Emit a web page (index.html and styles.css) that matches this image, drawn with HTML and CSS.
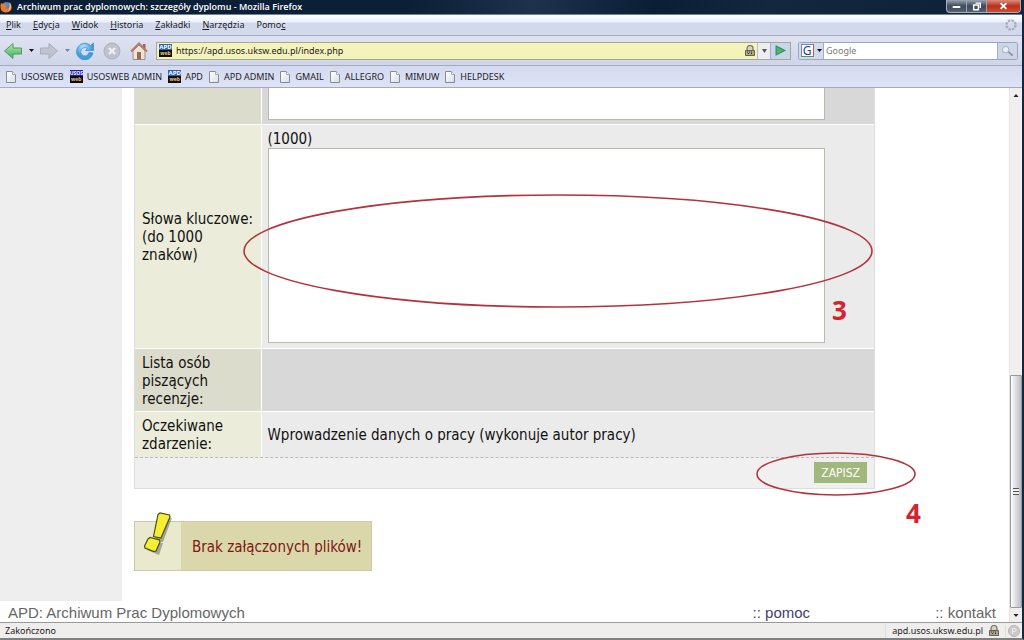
FILE: index.html
```html
<!DOCTYPE html>
<html lang="pl">
<head>
<meta charset="utf-8">
<title>Archiwum prac dyplomowych: szczegóły dyplomu</title>
<link rel="stylesheet" href="styles.css">
</head>
<body>
<svg class="defs" aria-hidden="true">
  <defs>
    <linearGradient id="paper" x2="1" y2="1"><stop offset="0" stop-color="#fff"/><stop offset="1" stop-color="#d9dfe3"/></linearGradient>
    <linearGradient id="green" x2="0" y2="1"><stop offset="0" stop-color="#b5e8ad"/><stop offset="1" stop-color="#3fae5f"/></linearGradient>
    <radialGradient id="blue" cx=".4" cy=".25"><stop offset="0" stop-color="#b4e6ff"/><stop offset="1" stop-color="#3d9fdf"/></radialGradient>
    <symbol id="page" viewBox="0 0 10 12"><path d="M.5.5h6l3 3v8h-9z" fill="url(#paper)" stroke="#848b94"/><path d="M6.500.5v3h3" fill="#fff" stroke="#a5abb3"/></symbol>
    <symbol id="lock" viewBox="0 0 10 11"><path d="M2 6V3.500a3 3 0 0 1 6 0V6" fill="#d5d2c4" stroke="#777263" stroke-width="1.200"/><path d="M.5 5.500h9v5h-9z" fill="#aaa58b" stroke="#666252"/><path d="M2 7h1m1 0h1m1 0h1M3 8.500h1m2 0h1" stroke="#333"/></symbol>
    <symbol id="arrow" viewBox="0 0 18 16"><path d="M.5 8L9 .5V5h8.500v6H9v4.500z"/></symbol>
  </defs>
</svg>
<div class="window">
  <header class="titlebar">
    <svg class="fox" viewBox="0 0 12 12"><circle cx="6.500" cy="5.500" r="4.500" fill="#4f86cd"/><path d="M1 2l2 1 3-1-1 2 2 1-2 2 2 1 3-2V2c3 4 2 9-4 9.500C1 11.500-.5 7 1 2z" fill="#ee7925"/><path d="M9 1c3 3 3 7-1 9 2-3 2-5 1-9z" fill="#ffc652"/></svg>
    <span class="caption">Archiwum prac dyplomowych: szczegóły dyplomu - Mozilla Firefox</span>
    <div class="winbtns">
      <button aria-label="Minimalizuj"><svg viewBox="0 0 20 12"><path d="M6 6h8v2H6z" fill="#fff"/></svg></button>
      <button aria-label="Przywróć"><svg viewBox="0 0 20 12"><path d="M9 3h5v5M7 5h5v5H7z" fill="none" stroke="#fff" stroke-width="1.500"/></svg></button>
      <button class="close" aria-label="Zamknij"><svg viewBox="0 0 34 12"><path d="M14 3l6 6m0-6l-6 6" stroke="#fff" stroke-width="2"/></svg></button>
    </div>
  </header>
  <nav class="menubar">
    <button><u>P</u>lik</button><button><u>E</u>dycja</button><button><u>W</u>idok</button><button><u>H</u>istoria</button><button><u>Z</u>akładki</button><button><u>N</u>arzędzia</button><button>Pomo<u>c</u></button>
    <svg class="throbber" viewBox="0 0 12 12"><circle cx="6" cy="6" r="4.500" fill="none" stroke="#a9adb8" stroke-width="2.400" stroke-dasharray="2.400 1.130"/></svg>
  </nav>
  <div class="toolbar">
    <div class="tools">
      <button aria-label="Wstecz"><svg class="i18" viewBox="0 0 18 16"><use href="#arrow" fill="url(#green)" stroke="#4d9c63"/></svg></button>
      <button class="drop" aria-label="Historia wstecz"><svg viewBox="0 0 5 3"><path d="M0 0h5L2.500 3z" fill="#111"/></svg></button>
      <button aria-label="Dalej"><svg class="i18 flip" viewBox="0 0 18 16"><use href="#arrow" fill="#bfc4d0" stroke="#a6abb9"/></svg></button>
      <button class="drop" aria-label="Historia dalej"><svg viewBox="0 0 5 3"><path d="M0 0h5L2.500 3z" fill="#7183a8"/></svg></button>
      <button aria-label="Odśwież"><svg class="i18" viewBox="0 0 18 18"><path d="M14.500 3.500A8.300 8.300 0 1 0 17 11l-4-.5a4.200 4.200 0 1 1-1.500-4L9.500 8.500h8V1z" fill="url(#blue)" stroke="#438ec8" stroke-width=".8"/></svg></button>
      <button class="stop" aria-label="Zatrzymaj"><svg class="i18" viewBox="0 0 18 18"><circle cx="9" cy="9" r="8" fill="#c0c3cd" stroke="#acb0bc"/><path d="M6 6l6 6m0-6l-6 6" stroke="#eef0f6" stroke-width="2.200"/></svg></button>
      <button class="home" aria-label="Strona startowa"><svg class="i18" viewBox="0 0 18 18"><path d="M3 9v8.500h12V9L9 3z" fill="#eee3d8" stroke="#a18e82"/><path d="M13 2h2.500v5L13 5z" fill="#a65f50"/><path d="M1 9.500L9 1.500l8 8" fill="none" stroke="#b47a6a" stroke-width="2"/><path d="M7 10h4v7.500H7z" fill="#9b6a50"/></svg></button>
    </div>
    <div class="address">
      <span class="fav">APD<small>web</small></span>
      <input type="text" aria-label="Adres" value="https://apd.usos.uksw.edu.pl/index.php">
      <svg class="lock" viewBox="0 0 10 11"><use href="#lock"/></svg>
      <button class="more" aria-label="Lista adresów"><svg viewBox="0 0 5 4"><path d="M0 0h5L2.500 4z" fill="#555"/></svg></button>
      <button class="go" aria-label="Przejdź"><svg viewBox="0 0 10 10"><path d="M1 1l8 4-8 4z" fill="#4fb573" stroke="#328b58"/></svg></button>
    </div>
    <div class="search">
      <button class="engine" aria-label="Wyszukiwarka"><span class="g">G</span><svg viewBox="0 0 5 3"><path d="M0 0h5L2.500 3z" fill="#111"/></svg></button>
      <input type="text" aria-label="Szukaj" placeholder="Google">
      <button class="find" aria-label="Szukaj"><svg viewBox="0 0 14 12"><circle cx="5" cy="4.500" r="3.500" fill="#e6f0f9" stroke="#9da8b8"/><path d="M8 7l4.500 4" stroke="#8791a3" stroke-width="2"/></svg></button>
    </div>
  </div>
  <nav class="bookmarks">
    <a href="#"><svg viewBox="0 0 10 12"><use href="#page"/></svg>USOSWEB</a>
    <a href="#"><span class="fav usos">USOS<small>web</small></span>USOSWEB ADMIN</a>
    <a href="#"><span class="fav">APD<small>web</small></span>APD</a>
    <a href="#"><svg viewBox="0 0 10 12"><use href="#page"/></svg>APD ADMIN</a>
    <a href="#"><svg viewBox="0 0 10 12"><use href="#page"/></svg>GMAIL</a>
    <a href="#"><svg viewBox="0 0 10 12"><use href="#page"/></svg>ALLEGRO</a>
    <a href="#"><svg viewBox="0 0 10 12"><use href="#page"/></svg>MIMUW</a>
    <a href="#"><svg viewBox="0 0 10 12"><use href="#page"/></svg>HELPDESK</a>
  </nav>
  <div class="view">
    <div class="doc">
      <div class="body">
        <main>
          <form class="details">
            <table>
              <tr class="dark first"><th></th><td><textarea class="abstract" aria-label="Streszczenie"></textarea></td></tr>
              <tr><th><label for="keywords">Słowa kluczowe: (do 1000 znaków)</label></th><td>(1000)<textarea id="keywords"></textarea></td></tr>
              <tr class="dark"><th>Lista osób piszących recenzje:</th><td></td></tr>
              <tr><th>Oczekiwane zdarzenie:</th><td>Wprowadzenie danych o pracy (wykonuje autor pracy)</td></tr>
            </table>
            <div class="actions"><button type="button">ZAPISZ</button></div>
            <svg class="ring ring-keywords" viewBox="0 0 630 114"><ellipse cx="315" cy="57" rx="314" ry="56"/></svg>
            <svg class="ring ring-save" viewBox="0 0 160 44"><ellipse cx="80" cy="22" rx="79" ry="21"/></svg>
            <span class="step step-three">3</span>
            <span class="step step-four">4</span>
          </form>
          <div class="notice">
            <div class="mark"><svg viewBox="0 0 34 44"><path d="M18 4l13 2-9 24-8-1zM9 30l13 1-4 12-12-5z" fill="#777" opacity=".6"/><path d="M17 2.500L19 1l9.500 2 .5 2-9 21-7.500-1.500z" fill="#f5ef2d" stroke="#4b4a28" stroke-width="1.200"/><path d="M7 27l2-1.500 9.500 2.500.5 2-4 9-2 .5L4 36l-.5-2z" fill="#f5ef2d" stroke="#4b4a28" stroke-width="1.200"/></svg></div>
            <p>Brak załączonych plików!</p>
          </div>
        </main>
      </div>
      <footer class="sitefoot"><span>APD: Archiwum Prac Dyplomowych</span><a class="help" href="#">:: pomoc</a><a href="#">:: kontakt</a></footer>
    </div>
    <div class="scroll">
      <svg viewBox="0 0 12 14"><path d="M3.500 9h5L6 6z" fill="#222"/></svg>
      <div class="track"><div class="thumb"><i></i></div></div>
      <svg viewBox="0 0 12 14"><path d="M3.500 6h5L6 9z" fill="#222"/></svg>
    </div>
  </div>
  <footer class="status"><span>Zakończono</span><div class="site">apd.usos.uksw.edu.pl<svg class="lock" viewBox="0 0 10 11"><use href="#lock"/></svg></div><div class="badge"><svg viewBox="0 0 12 12"><circle cx="6" cy="6" r="5.500" fill="#c9c9c9" stroke="#b7b7b7"/><path d="M4.500 9V3.500h2a1.500 1.500 0 0 1 0 3h-2" fill="none" stroke="#eee"/></svg></div></footer>
</div>
</body>
</html>
```
FILE: styles.css
```css
* { box-sizing: border-box; }
body { margin: 0; font: 9px/14px "Noto Sans", sans-serif; color: #1c1c24; }
button { margin: 0; padding: 0; border: 0; background: none; font: inherit; color: inherit; }
input { min-width: 0; border: 0; padding: 0; background: none; font: inherit; color: inherit; outline: 0; }
a { color: inherit; text-decoration: none; }
svg { display: block; flex: none; }
.defs { position: absolute; width: 0; height: 0; }
.window { display: flex; flex-direction: column; height: 100vh; overflow: hidden; border-right: 2px solid #16273d; border-bottom: 2px solid #808080; }

.titlebar { flex: none; display: flex; align-items: center; height: 15px; padding-right: 1px; background: linear-gradient(90deg, #0c1f36, #0b1f36 40%, #20314b 52%, #0b1e36 64%, #14273f 75%, #0b2036); border-bottom: 1px solid #6f8590; }
.fox { width: 12px; height: 12px; margin-right: 5px; }
.caption { flex: 1; color: #fff; font-family: "Open Sans", sans-serif; font-weight: 600; }
.winbtns { display: flex; align-self: flex-start; height: 13px; border: 1px solid #a6afb8; border-top: 0; border-radius: 0 0 4px 4px; overflow: hidden; background: linear-gradient(#9aa4b0, #3c4a5a 50%, #54616f); }
.winbtns button + button { border-left: 1px solid #9aa4ae; }
.winbtns svg { width: 19px; height: 12px; }
.winbtns .close { background: linear-gradient(#d98d7c, #b9301d 50%, #cf4d32); }
.winbtns .close svg { width: 33px; }

.menubar { flex: none; display: flex; align-items: center; gap: 12px; height: 21px; padding: 0 5px 0 6px; background: linear-gradient(#fff, #eceffa 7px, #d3d9ed 8px, #d4daee); border-bottom: 1px solid #a5abba; }
.throbber { width: 12px; height: 12px; margin-left: auto; }

.toolbar { flex: none; display: flex; align-items: center; height: 30px; padding: 0 4px; background: linear-gradient(#dfe3f2, #cfd5e9); border-bottom: 1px solid #a5abba; }
.tools { display: flex; align-items: center; width: 152px; }
.i18 { width: 18px; height: 18px; }
.flip { transform: scaleX(-1); }
.drop svg { width: 5px; height: 3px; margin: 0 6px 0 7px; }
.stop, .home { margin-left: 9px; }
.address { flex: 1; display: flex; align-items: center; height: 18px; border: 1px solid #a2a89c; background: #f4f3b9; }
.address .fav { margin: 0 4px 0 2px; }
.address input { flex: 1; }
.lock { width: 10px; height: 11px; }
.more, .go, .find, .engine { display: flex; align-items: center; justify-content: center; height: 100%; }
.more { width: 13px; margin-left: 2px; background: #edeef3; border-left: 1px solid #b8bcc6; }
.more svg { width: 5px; height: 4px; }
.go { width: 20px; background: #c9d5e9; border-left: 1px solid #a3b0c8; }
.go svg { width: 11px; height: 11px; }
.search { display: flex; align-items: center; width: 220px; height: 18px; margin-left: 7px; border: 1px solid #9ba6bd; border-radius: 2px; background: #fff; }
.engine { width: 25px; gap: 3px; background: #d3daec; border-right: 1px solid #a5adc0; }
.engine svg { width: 5px; height: 3px; }
.g { width: 13px; height: 13px; border: 1px solid #6e87c4; border-right-color: #c55; border-bottom-color: #595; background: #fff; color: #21408f; font-size: 12px; line-height: 11px; }
.search input { flex: 1; padding-left: 2px; }
.search input::placeholder { color: #777; opacity: 1; }
.find { width: 20px; background: #cdd6e9; border-left: 1px solid #a5adc0; }
.find svg { width: 13px; height: 12px; }
.fav { flex: none; width: 13px; height: 13px; background: linear-gradient(#2f62ae 50%, #111 50%); color: #fff; font-size: 6px; font-weight: 700; line-height: 7px; text-align: center; overflow: hidden; }
.fav small { display: block; font-size: 5px; line-height: 5px; color: #e5c489; }
.fav.usos { background: linear-gradient(#1c1fb0 50%, #0a0a16 50%); font-size: 5px; }

.bookmarks { flex: none; display: flex; align-items: center; gap: 6px; height: 22px; padding: 0 6px; background: linear-gradient(#d3d9ee, #dfe3f8); border-bottom: 1px solid #a3abc2; }
.bookmarks a { display: flex; align-items: center; gap: 4px; }
.bookmarks a > svg { width: 10px; height: 12px; margin-right: 1px; }

.view { flex: 1; display: flex; min-height: 0; }
.doc { flex: 1; display: flex; flex-direction: column; min-width: 0; background: #fff; }
.body { flex: 1; min-height: 0; padding-left: 123px; background: linear-gradient(90deg, #eee 122px, #fff 122px); }
main { padding: 0 134px 0 11px; color: #111; font: 15px/18px "DejaVu Sans Condensed", "DejaVu Sans", sans-serif; }
.details { position: relative; border: 1px solid #ddd; border-top: 0; background: #f0f0f0; }
table { width: 100%; border-collapse: collapse; background: #ebebeb; }
tr + tr { border-top: 1px solid #fff; }
th { width: 126px; padding: 5px 6px 4px 7px; background: #ebedda; border-right: 1px solid #fff; font-weight: 400; text-align: left; }
td { padding: 5px 49px 5px 6px; }
.dark th { background: #dcdccc; }
.dark td { background: #d8d8d8; }
.dark th { padding-bottom: 3px; }
textarea { display: block; width: 100%; height: 195px; border: 1px solid #b9bba8; background: #fff; resize: none; outline: 0; }
.first td { padding-top: 0; padding-bottom: 4px; }
.abstract { height: 32px; border-top: 0; }
.actions { display: flex; justify-content: flex-end; padding: 4px 7px 5px; border-top: 1px dashed #bbb; }
.actions button { padding: 0 7px; height: 21px; background: #a0b87b; color: #fff; font-size: 12px; }
.ring { position: absolute; fill: none; stroke: #b3333c; stroke-width: 1.6px; pointer-events: none; }
.ring-keywords { left: 108px; top: 106px; width: 630px; height: 114px; }
.ring-save { left: 621px; top: 364px; width: 160px; height: 44px; }
.step { position: absolute; color: #d6222f; font: 700 26px/26px "Open Sans", sans-serif; }
.step-three { left: 697px; top: 209px; }
.step-four { left: 771px; top: 412px; }
.notice { display: inline-flex; margin-top: 32px; border: 1px solid #cccba5; background: #dad8ab; }
.mark { position: relative; width: 46px; height: 48px; background: #e9eacd; }
.mark svg { position: absolute; left: 6px; top: -10px; width: 34px; height: 44px; }
.notice p { margin: 0; padding: 16px 9px 14px 11px; color: #7c1712; }
.sitefoot { flex: none; display: flex; height: 21px; padding: 2px 13px 0 8px; color: #666; font: 15px/20px "Liberation Sans", sans-serif; }
.help { margin-left: auto; margin-right: 125px; color: #404070; }
.scroll { flex: none; display: flex; flex-direction: column; width: 13px; background: #f1efed; border-left: 1px solid #e4e4e4; }
.scroll > svg { width: 12px; height: 14px; }
.track { flex: 1; display: flex; align-items: flex-end; }
.thumb { display: flex; align-items: center; justify-content: center; width: 12px; height: 46%; border: 1px solid #999; border-radius: 1px; background: linear-gradient(90deg, #fff, #e2e3e8 40%, #b9bac4); }
.thumb i { width: 6px; height: 7px; background: repeating-linear-gradient(#555 0 1px, #eee 1px 3px); }
.status { flex: none; display: flex; align-items: center; height: 16px; padding-left: 5px; border-top: 1px solid #999; background: #f0eeec; }
.site { display: flex; align-items: center; gap: 6px; margin-left: auto; padding: 0 6px; border-left: 1px solid #ddd; }
.badge { padding: 0 2px; border-left: 1px solid #ddd; }
.badge svg { width: 12px; height: 12px; }
```
